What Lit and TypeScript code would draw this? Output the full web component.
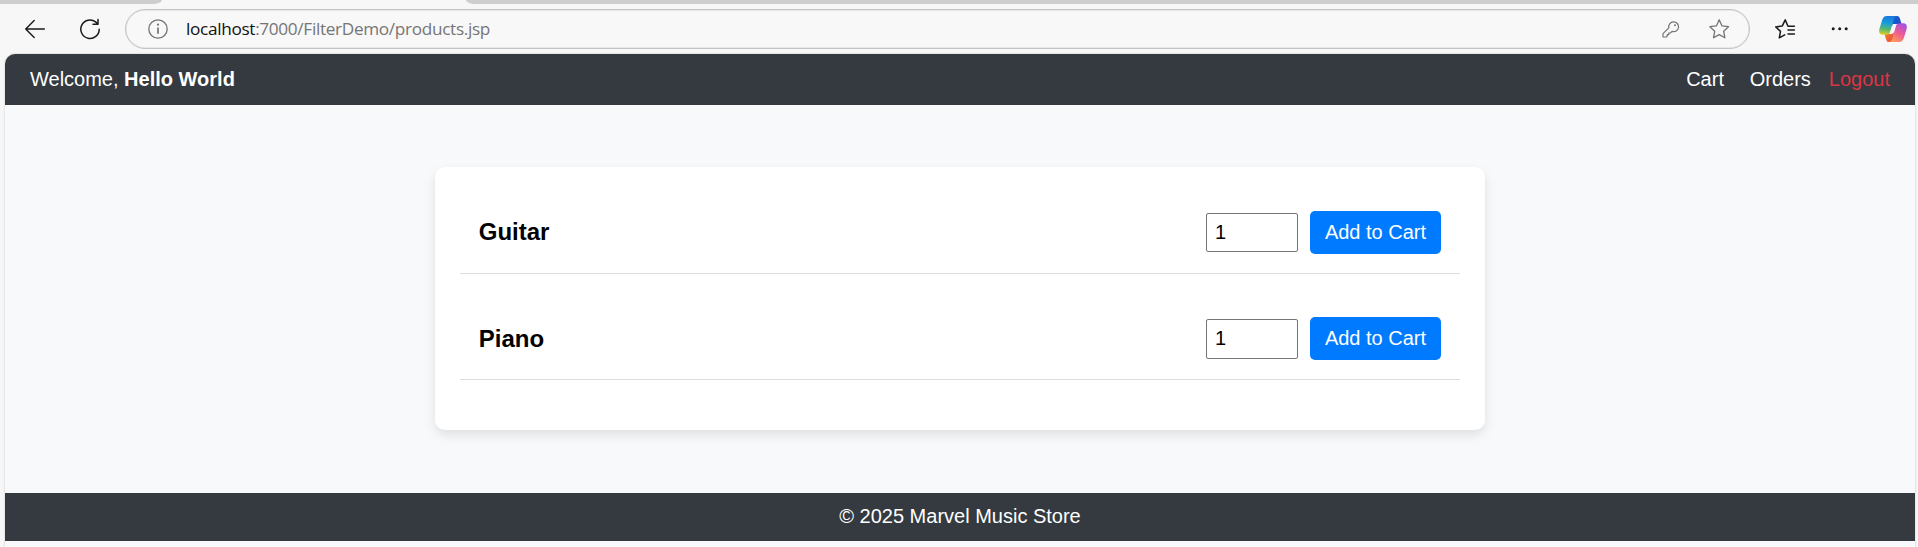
import { LitElement, html, css } from "lit";
import { customElement, property } from "lit/decorators.js";

@customElement("browser-bar")
class BrowserBar extends LitElement {
  static styles = css`
    :host { display: flex; flex-direction: column; height: 54px; background: #f7f7f7; }
    .tabs { display: flex; justify-content: space-between; height: 4px; flex: none; }
    .tab-rest { background: #cdcdcd; }
    .before { width: 162px; border-bottom-right-radius: 9px 4px; }
    .after { width: 1452px; border-bottom-left-radius: 9px 4px; }
    .tools { display: flex; align-items: center; height: 50px; box-sizing: border-box; padding: 5px 11px 5px 24px; }
    svg { display: block; flex: none; fill: none; }
    .reload { margin: 0 24px 0 33px; }
    .address { display: flex; flex: none; align-items: center; box-sizing: border-box; width: 1625px; height: 40px; border: 1px solid #c4c4c4; border-radius: 20px; padding: 0 19px 0 21px; background: #f8f8f8; box-shadow: inset 0 0 0 0.5px #d8d8d8; }
    .url { margin-left: 17px; padding-bottom: 1px; font: 17.2px/24px "Open Sans", sans-serif; letter-spacing: -0.32px; color: #757575; flex: 1; white-space: nowrap; }
    .host { color: #111; }
    .star { margin-left: 28px; }
    .favorites { margin-left: 23px; }
    .more { margin-left: 32px; }
    .copilot { margin-left: 30px; }
  `;
  render() {
    return html`
      <div class="tabs"><div class="tab-rest before"></div><div class="tab-rest after"></div></div>
      <div class="tools">
        <svg width="22" height="22" viewBox="0 0 22 22" stroke="#1a1a1a" stroke-width="1.4" stroke-linecap="round" stroke-linejoin="round"><path d="M20.3 11H1.7M10.2 2.5 1.7 11l8.5 8.5"/></svg>
        <svg class="reload" width="22" height="22" viewBox="0 0 22 22" stroke="#1a1a1a" stroke-width="1.5" stroke-linecap="round" stroke-linejoin="round"><path d="M20.2 11.2A9.2 9.2 0 1 1 16.6 3.9L19 6.2M19 1.6v4.7h-5"/></svg>
        <div class="address">
          <svg width="22" height="22" viewBox="0 0 22 22" stroke="#747474" stroke-width="1.3"><circle cx="11" cy="11" r="9.2"/><path d="M11 9.5v6.3" stroke-width="1.7"/><circle cx="11" cy="6.7" r="1.1" fill="#747474" stroke="none"/></svg>
          <div class="url"><span class="host">localhost</span>:7000/FilterDemo/products.jsp</div>
          <svg width="20" height="20" viewBox="0 0 20 20" stroke="#747474" stroke-width="1.2" stroke-linejoin="round"><path d="M13.4 2.9a4.9 4.9 0 1 1-1.4 9.5l-1.6 1.6H8.8v1.6H7.2v1.5l-.9.9H3v-3.3l5.8-5.8a4.9 4.9 0 0 1 4.6-6Z"/><circle cx="15" cy="6.3" r="1" fill="#747474" stroke="none"/></svg>
          <svg class="star" width="22" height="22" viewBox="0 0 22 22" stroke="#747474" stroke-width="1.3" stroke-linejoin="round"><path d="m11.2 1.8 2.8 6.1 6.5.8-4.8 4.6 1.2 6.5-5.7-3.2-5.7 3.2 1.2-6.5-4.8-4.6 6.5-.8Z"/></svg>
        </div>
        <svg class="favorites" width="26" height="22" viewBox="0 0 26 22" stroke="#1a1a1a" stroke-width="1.5" stroke-linecap="round" stroke-linejoin="round"><path d="M21.4 8.2H15l-2.8-6.3-3 6.2-6.5.8L7.5 13.4l-1.2 6.4 5.4-3M15 12.1h6.4M15 15.9h6.4"/></svg>
        <svg class="more" width="18" height="6" viewBox="0 0 18 6"><circle cx="2.2" cy="2.8" r="1.5" fill="#1a1a1a"/><circle cx="8.7" cy="2.8" r="1.5" fill="#1a1a1a"/><circle cx="15.2" cy="2.8" r="1.5" fill="#1a1a1a"/></svg>
        <svg class="copilot" width="28" height="26" viewBox="0 0 28 26">
          <defs>
            <linearGradient id="a" x1=".4" y1="0" x2=".3" y2="1"><stop offset="0" stop-color="#1878e0"/><stop offset=".38" stop-color="#189fd8"/><stop offset=".7" stop-color="#57b86f"/><stop offset="1" stop-color="#e8ce28"/></linearGradient>
            <linearGradient id="b" x1=".8" y1="0" x2=".3" y2="1"><stop offset="0" stop-color="#9f50e8"/><stop offset=".5" stop-color="#ee5a96"/><stop offset="1" stop-color="#ff9a5a"/></linearGradient>
            <linearGradient id="c" x1="0" y1="0" x2="1" y2="1"><stop offset="0" stop-color="#1a60d0"/><stop offset="1" stop-color="#1b4bc8"/></linearGradient>
            <linearGradient id="d" x1="0" y1="0" x2="1" y2="1"><stop offset="0" stop-color="#f0852c"/><stop offset="1" stop-color="#e94b3f"/></linearGradient>
          </defs>
          <path d="M13 0h5c1.7 0 2.4 1 2.9 2.6l1.7 5.6h-6.4l-3 3Z" fill="url(#c)"/>
          <path d="M15 26h-5c-1.7 0-2.4-1-2.9-2.6L5.4 17.8h6.4l3-3Z" fill="url(#d)"/>
          <path d="M8 0h9.8c-1.8.3-2.6 1.6-3.1 3.4l-3.3 11.9c-.7 2.6-1.9 3.5-4.5 3.5H3.6C.6 18.8-.4 16.2.4 13L3 4.4C3.9 1.4 5.4 0 8 0Z" fill="url(#a)"/>
          <path d="M20 26h-9.8c1.8-.3 2.6-1.6 3.1-3.4l3.3-11.9c.7-2.6 1.9-3.5 4.5-3.5h3.3c3 0 4 2.6 3.2 5.8L25 21.6c-.9 3-2.4 4.4-5 4.4Z" fill="url(#b)"/>
          <path d="M13.9 8.1h4.3c-1 .6-1.4 1.5-1.7 2.6l-1.3 4.6c-.5 1.8-1.4 2.7-3.3 2.7H9.7c1-.6 1.4-1.5 1.7-2.7Z" fill="#f7f7f7"/>
        </svg>
      </div>`;
  }
}

@customElement("product-row")
class ProductRow extends LitElement {
  @property() name = "";
  static styles = css`
    :host { display: flex; align-items: center; box-sizing: border-box; height: 81.75px; padding: 0 19px 0 18.75px; border-bottom: 1px solid #ddd; font: 20px/23px "Liberation Sans", Arial, sans-serif; color: #000; }
    .name { flex: 1; font-weight: bold; font-size: 24px; line-height: 28px; }
    .qty { box-sizing: border-box; width: 92px; height: 39.75px; margin: 0 12px 0 0; padding: 1px 8px; border: 1px solid #767676; border-radius: 2px; background: #fff; color: #000; font: inherit; appearance: textfield; }
    .add { width: 131px; height: 43px; padding: 0; border: 0; border-radius: 5px; background: #007bff; color: #fff; font: inherit; }
  `;
  render() {
    return html`<div class="name">${this.name}</div>
      <input class="qty" type="number" value="1" />
      <button class="add">Add to Cart</button>`;
  }
}

@customElement("app-root")
class AppRoot extends LitElement {
  static styles = css`
    :host { display: flex; flex-direction: column; height: 547px; overflow: hidden; background: #f7f7f7; font: 20px/23px "Liberation Sans", Arial, sans-serif; }
    .page { display: flex; flex-direction: column; flex: 1; margin: 0 3px 0 5px; border-radius: 10px 10px 0 0; background: #f8f9fa; box-shadow: 0 0 2px #bbb; }
    .header { display: flex; align-items: center; box-sizing: border-box; height: 51px; padding: 0 25px; background: #343a40; color: #fff; border-radius: 10px 10px 0 0; }
    .welcome { flex: 1; }
    .cart { margin-right: 25.75px; }
    .orders { margin-right: 18px; }
    .logout { color: #dc3545; }
    .card { box-sizing: border-box; width: 1050px; height: 263px; margin: 62px auto 63px; padding: 25px; border-radius: 10px; background: #fff; box-shadow: 0 5px 12px rgba(0, 0, 0, 0.1); display: flex; flex-direction: column; gap: 24.5px; }
    .footer { box-sizing: border-box; height: 48px; padding-bottom: 2px; display: flex; align-items: center; justify-content: center; background: #343a40; color: #fff; }
  `;
  render() {
    return html`
      <browser-bar></browser-bar>
      <div class="page">
        <div class="header">
          <div class="welcome">Welcome, <b>Hello World</b></div>
          <span class="cart">Cart</span><span class="orders">Orders</span><span class="logout">Logout</span>
        </div>
        <div class="card">
          <product-row name="Guitar"></product-row>
          <product-row name="Piano"></product-row>
        </div>
        <div class="footer">© 2025 Marvel Music Store</div>
      </div>`;
  }
}
